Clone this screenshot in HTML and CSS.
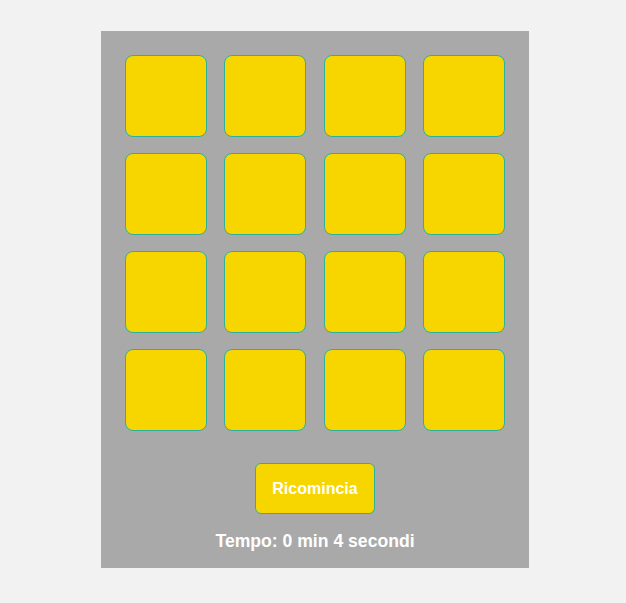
FILE: index.html
```html
<!DOCTYPE html>
<html lang="it">
<head>
<meta charset="utf-8">
<title>Memory</title>
<link rel="stylesheet" href="styles.css">
</head>
<body>
<div class="page">
  <div class="game">
    <div class="board">
      <div class="card"></div><div class="card"></div><div class="card"></div><div class="card"></div>
      <div class="card"></div><div class="card"></div><div class="card"></div><div class="card"></div>
      <div class="card"></div><div class="card"></div><div class="card"></div><div class="card"></div>
      <div class="card"></div><div class="card"></div><div class="card"></div><div class="card"></div>
    </div>
    <button class="restart" type="button">Ricomincia</button>
    <div class="timer">Tempo: 0 min 4 secondi</div>
  </div>
</div>
</body>
</html>
```
FILE: styles.css
```css
html, body {
  margin: 0;
  padding: 0;
  background: #f2f2f2;
  font-family: "Liberation Sans", Arial, sans-serif;
}
.page {
  display: flex;
  justify-content: center;
  padding: 31px 0 0 4px;
}
.game {
  width: 428px;
  box-sizing: border-box;
  background: #a9a9a9;
  padding: 24px 24px 16px;
  display: flex;
  flex-direction: column;
  align-items: center;
}
.board {
  width: 100%;
  display: grid;
  grid-template-columns: repeat(4, 82px);
  grid-auto-rows: 82px;
  justify-content: space-between;
  row-gap: 16px;
}
.card {
  box-sizing: border-box;
  background: #f7d600;
  border: 1px solid #2eb09a;
  border-radius: 8px;
}
.restart {
  margin-top: 32px;
  width: 120px;
  height: 51px;
  box-sizing: border-box;
  background: #f7d600;
  border: 1px solid #2eb09a;
  border-radius: 6px;
  color: #ffffff;
  font-family: "Liberation Sans", Arial, sans-serif;
  font-weight: bold;
  font-size: 16px;
  padding: 0;
}
.timer {
  margin-top: 17px;
  color: #ffffff;
  font-weight: bold;
  font-size: 17.6px;
}
```
